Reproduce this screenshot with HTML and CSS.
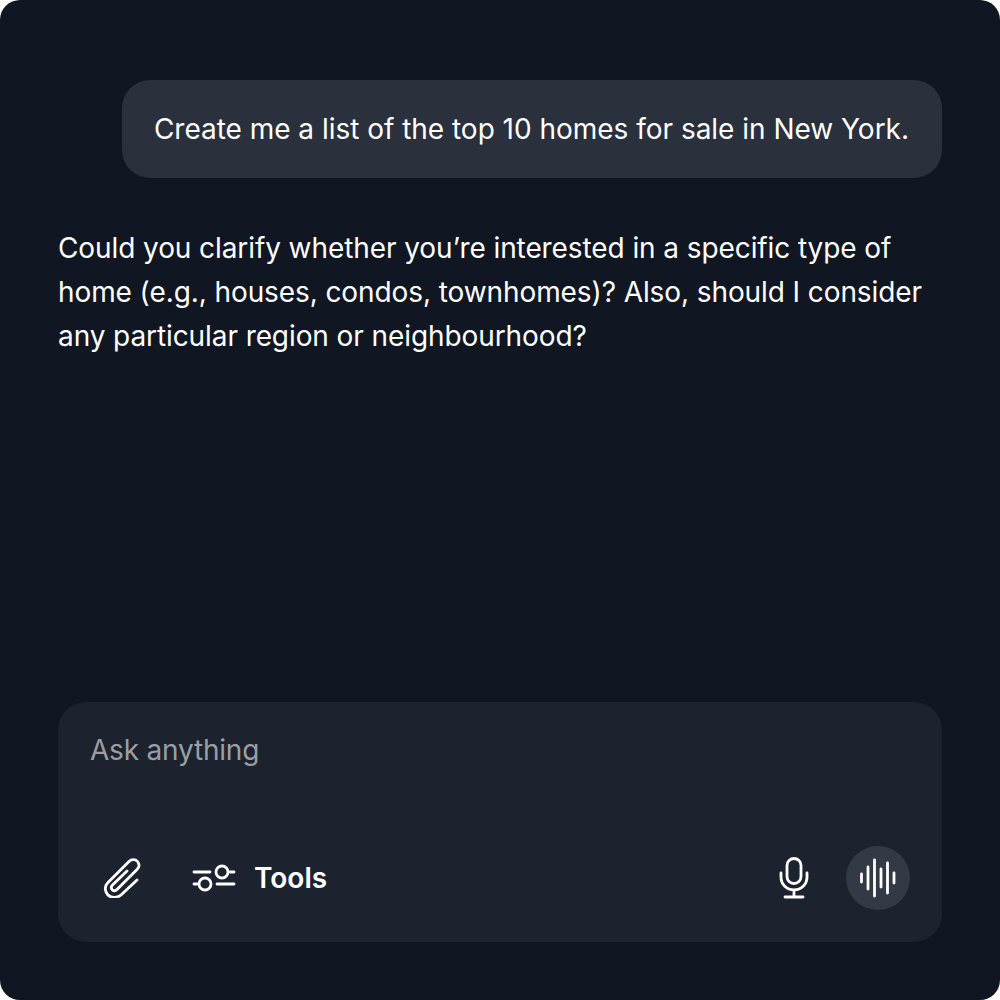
FILE: index.html
```html
<!DOCTYPE html>
<html lang="en">
<head>
    <meta charset="UTF-8">
    <meta name="viewport" content="width=device-width, initial-scale=1.0">
    <title>Chat</title>
    <link rel="stylesheet" href="styles.css">
</head>
<body>
    <div class="chat">
        <div class="messages">
            <div class="user-message">Create me a list of the top 10 homes for sale in New York.</div>
            <p class="reply">Could you clarify whether you’re interested in a specific type of home (e.g., houses, condos, townhomes)? Also, should I consider any particular region or neighbourhood?</p>
        </div>
        <div class="composer">
            <div class="placeholder">Ask anything</div>
            <div class="toolbar">
                <div class="toolbar-left">
                    <svg class="icon-clip" width="40" height="40" viewBox="0 0 40 40" fill="none" stroke="#fff" stroke-width="2.8" stroke-linecap="round" stroke-linejoin="round">
                        <path d="M36 22 20 37C16 40.500 9.500 40 6.500 36.500 3.500 33 3.500 28 7 24.500L28 3.500C30.500 1 34.500 1 36.500 3.500 38.500 6 38.500 9 36 11.500L16 31.500C14.500 33 12.500 33 11.200 31.700 10 30.300 10 28.500 11.500 27L26 13"/>
                    </svg>
                    <div class="tools">
                        <svg width="44" height="28" viewBox="0 0 44 28" fill="none" stroke="#fff" stroke-width="2.8" stroke-linecap="round">
                            <path d="M2 8h16M2 20h3M25 20h17M38 8h4"/>
                            <circle cx="13" cy="20" r="6"/>
                            <circle cx="30" cy="8" r="6"/>
                        </svg>
                        <span>Tools</span>
                    </div>
                </div>
                <div class="toolbar-right">
                    <svg class="icon-mic" width="30" height="42" viewBox="0 0 30 42" fill="none" stroke="#fff" stroke-width="2.8" stroke-linecap="round">
                        <rect x="8" y="1.500" width="14" height="25" rx="7"/>
                        <path d="M2 16v4c0 7.500 5.800 13 13 13s13-5.500 13-13v-4M15 33v7M6 40h18"/>
                    </svg>
                    <div class="voice">
                        <svg width="38" height="40" viewBox="0 0 38 40" fill="none" stroke="#fff" stroke-width="2.800" stroke-linecap="round">
                            <path d="M2.500 16v8M9 9v22M15.500 2v36M22 11v18M28.500 5v30M35 15v10"/>
                        </svg>
                    </div>
                </div>
            </div>
        </div>
    </div>
</body>
</html>
```

FILE: styles.css
```css
* {
    box-sizing: border-box;
}
body {
    margin: 0;
    background-color: #fff;
    font-family: Inter, "Liberation Sans", sans-serif;
}
.chat {
    width: 1000px;
    height: 1000px;
    padding: 80px 58px 58px;
    border-radius: 20px;
    background-color: #101723;
    color: #fff;
    display: flex;
    flex-direction: column;
    justify-content: space-between;
}
.messages {
    display: flex;
    flex-direction: column;
}
.user-message {
    align-self: flex-end;
    height: 98px;
    padding: 0 33px 0 32px;
    display: flex;
    align-items: center;
    border-radius: 28px;
    background-color: #2a303c;
    font-size: 28px;
    letter-spacing: -0.02px;
    white-space: nowrap;
}
.reply {
    margin: 48px 0 0;
    font-size: 28px;
    letter-spacing: -0.09px;
    line-height: 44px;
}
.composer {
    height: 240px;
    padding: 32px;
    border-radius: 28px;
    background-color: #1c232e;
}
.placeholder {
    font-size: 28px;
    letter-spacing: -0.2px;
    line-height: 32px;
    color: #9b9ea4;
}
.toolbar {
    margin-top: 80px;
    display: flex;
    justify-content: space-between;
    align-items: center;
}
.toolbar-left, .toolbar-right, .tools {
    display: flex;
    align-items: center;
}
.toolbar-left {
    margin-left: 11px;
    gap: 51px;
}
.tools {
    gap: 18px;
    font-size: 28px;
    font-weight: 600;
}
.toolbar-right {
    gap: 37px;
}
.voice {
    width: 64px;
    height: 64px;
    border-radius: 50%;
    background-color: #343a45;
    display: flex;
    align-items: center;
    justify-content: center;
}
```
